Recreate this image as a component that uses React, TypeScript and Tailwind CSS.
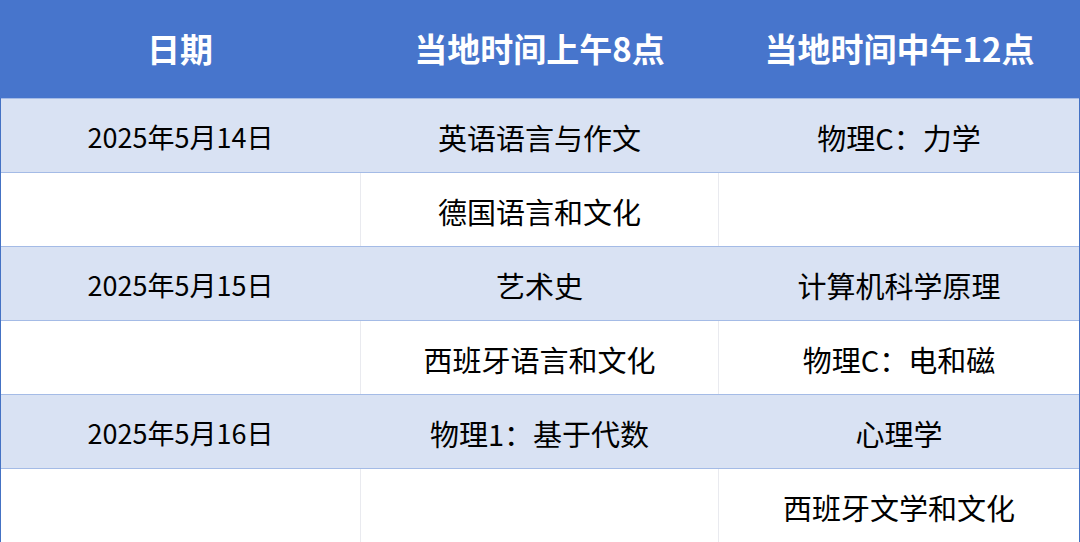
import React from "react";

const rows: { date: string; am: string; noon: string }[] = [
  { date: "2025年5月14日", am: "英语语言与作文", noon: "物理C：力学" },
  { date: "", am: "德国语言和文化", noon: "" },
  { date: "2025年5月15日", am: "艺术史", noon: "计算机科学原理" },
  { date: "", am: "西班牙语言和文化", noon: "物理C：电和磁" },
  { date: "2025年5月16日", am: "物理1：基于代数", noon: "心理学" },
  { date: "", am: "", noon: "西班牙文学和文化" },
];

const font = { fontFamily: '"Noto Sans CJK SC", "Noto Sans", sans-serif' };

export default function App() {
  return (
    <div className="w-[1080px] h-[542px] bg-white overflow-hidden" style={font}>
      <div className="grid grid-cols-[360px_359px_1fr] h-[98px] bg-[#4775cc] text-white text-[33px] font-semibold">
        <div className="flex items-center justify-center pb-px">日期</div>
        <div className="flex items-center justify-center pb-px">当地时间上午8点</div>
        <div className="flex items-center justify-center pb-px">当地时间中午12点</div>
      </div>
      <div className="border-x border-b border-[#4472c4]">
        {rows.map((r, i) => {
          const shaded = i % 2 === 0;
          return (
            <div
              key={i}
              className={`grid grid-cols-[359px_359px_1fr] h-[74px] border-t border-[#a4bbe6] text-[29px] text-black ${
                shaded ? "bg-[#d9e2f3]" : "bg-white"
              }`}
            >
              <div className="flex items-center justify-center pt-1 text-[27px]">{r.date}</div>
              <div
                className={`flex items-center justify-center pt-1 ${
                  shaded ? "" : "border-x border-[#e9eaef]"
                }`}
              >
                {r.am}
              </div>
              <div className="flex items-center justify-center pt-1">{r.noon}</div>
            </div>
          );
        })}
      </div>
    </div>
  );
}
